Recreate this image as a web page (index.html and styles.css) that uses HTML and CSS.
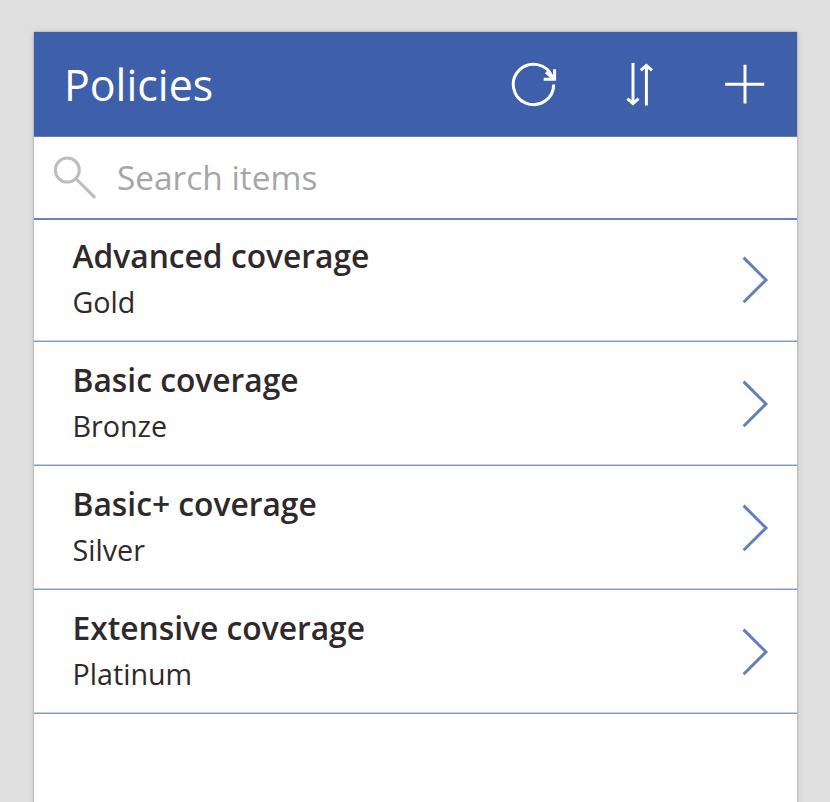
FILE: index.html
```html
<!DOCTYPE html>
<html lang="en">
<head>
<meta charset="utf-8">
<title>Policies</title>
<link rel="stylesheet" href="styles.css">
</head>
<body>
<main class="screen">
  <header class="header">
    <h1 class="title">Policies</h1>
    <svg class="icon refresh" width="48" height="48" viewBox="0 0 48 48"><path d="M43.7 24.4A20.2 20.2 0 1 1 42.2 16.8"/><path d="M44.6 9.3V19.2H33.7M36 12.2L43.5 19"/></svg>
    <svg class="icon sort" width="30" height="46" viewBox="0 0 30 46"><path d="M8 2V42.5M2.4 37.7L8 42.6L13.6 37.7M21.4 44.5V4M15.8 9.3L21.4 4.4L27 9.3"/></svg>
    <svg class="icon add" width="40" height="40" viewBox="0 0 40 40"><path d="M.2 20.2H39.2M20 .8V39.6"/></svg>
  </header>
  <div class="search">
    <svg class="magnifier" width="44" height="44" viewBox="0 0 44 44"><circle cx="14.3" cy="14.1" r="12"/><path d="M23 22.7L41.2 40.9"/></svg>
    <span class="placeholder">Search items</span>
  </div>
  <ul class="list">
    <li class="row">
      <div class="text"><div class="name">Advanced coverage</div><div class="tier">Gold</div></div>
      <svg class="chevron" width="28" height="50" viewBox="0 0 28 50"><path d="M2.6 2.6L25 25L2.6 47.2"/></svg>
    </li>
    <li class="row">
      <div class="text"><div class="name">Basic coverage</div><div class="tier">Bronze</div></div>
      <svg class="chevron" width="28" height="50" viewBox="0 0 28 50"><path d="M2.6 2.6L25 25L2.6 47.2"/></svg>
    </li>
    <li class="row">
      <div class="text"><div class="name">Basic+ coverage</div><div class="tier">Silver</div></div>
      <svg class="chevron" width="28" height="50" viewBox="0 0 28 50"><path d="M2.6 2.6L25 25L2.6 47.2"/></svg>
    </li>
    <li class="row">
      <div class="text"><div class="name">Extensive coverage</div><div class="tier">Platinum</div></div>
      <svg class="chevron" width="28" height="50" viewBox="0 0 28 50"><path d="M2.6 2.6L25 25L2.6 47.2"/></svg>
    </li>
  </ul>
</main>
</body>
</html>
```
FILE: styles.css
```css
* { box-sizing: border-box; }
body {
  margin: 0;
  height: 802px;
  padding: 32px 33px 0 34px;
  overflow: hidden;
  background: #e0e0e0;
  font-family: "Open Sans", sans-serif;
  color: #2f292b;
}
.screen {
  height: 800px;
  background: #fff;
  box-shadow: 0 0 2px rgba(0, 0, 0, .3), 0 1px 8px rgba(0, 0, 0, .12);
}
.header {
  display: flex;
  align-items: center;
  height: 105px;
  padding: 0 32px 0 30px;
  background: #3e60aa;
  border-bottom: 1px solid #5f7dbb;
}
.title {
  flex: 1;
  margin: 0;
  padding-top: 2px;
  font-size: 42.9px;
  font-weight: 400;
  line-height: 60px;
  color: #fff;
}
svg { display: block; fill: none; }
.icon { stroke: #fff; stroke-width: 3; }
.sort { margin: 0 70px 0 67px; }
.search {
  display: flex;
  align-items: center;
  height: 83px;
  padding-left: 19px;
  border-bottom: 2px solid #6482c2;
}
.magnifier { stroke: #bdbdbd; stroke-width: 3; stroke-linecap: round; }
.placeholder {
  margin-left: 20px;
  padding-bottom: 1px;
  font-size: 33.4px;
  line-height: 46px;
  color: #a6a6a6;
}
.list { margin: 0; padding: 0; list-style: none; }
.row {
  display: flex;
  align-items: flex-end;
  justify-content: space-between;
  height: 124px;
  padding: 0 28px 16px 38.5px;
  border-bottom: 1px solid #7f99cc;
  box-shadow: inset 0 -1px #c5d0e7;
}
.row:first-child { height: 122px; }
.name { font-size: 31.75px; font-weight: 600; line-height: 46px; }
.tier { font-size: 28.7px; line-height: 46px; }
.chevron { margin-bottom: 20px; stroke: #6180bd; stroke-width: 3; }
```
